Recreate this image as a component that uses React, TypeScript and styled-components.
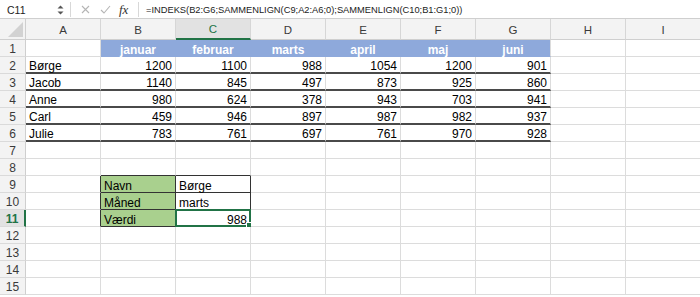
import styled, { createGlobalStyle } from 'styled-components'

const GlobalStyle = createGlobalStyle`
  html, body {
    margin: 0;
    padding: 0;
    background: #ffffff;
  }
  body {
    font-family: 'Liberation Sans', Arial, sans-serif;
  }
`

const GRID = '#dcdcdc'
const DARK = '#4a4a4a'
const BLUE = '#8ea9db'
const GREEN_FILL = '#a9d08e'
const EXCEL_GREEN = '#217346'

const Window = styled.div`
  width: 700px;
  height: 297px;
  overflow: hidden;
  display: flex;
  flex-flow: column nowrap;
  background: #fff;
`

const FormulaBar = styled.div`
  display: flex;
  align-items: center;
  height: 19px;
  padding-top: 1px;
  box-sizing: border-box;
  border-bottom: 1px solid #cfcfcf;
  font-size: 10px;
  color: #222;
`

const NameBox = styled.div`
  width: 50px;
  padding-left: 7px;
  font-size: 10.5px;
`

const Spinner = styled.div`
  display: flex;
  flex-flow: column;
  gap: 2px;
  width: 7px;
  svg {
    display: block;
  }
`

const Divider = styled.div<{ $space: number }>`
  width: 1px;
  height: 15px;
  background: #d8d8d8;
  margin: 0 ${(p) => p.$space}px 0 ${(p) => p.$space - 2}px;
`

const BarIcon = styled.span<{ $w: number }>`
  display: inline-flex;
  justify-content: center;
  width: ${(p) => p.$w}px;
`

const Fx = styled.span`
  font-family: 'Liberation Serif', 'Times New Roman', serif;
  font-style: italic;
  font-size: 13px;
  color: #333;
  width: 14px;
`

const Formula = styled.div`
  font-size: 9.3px;
  white-space: nowrap;
`

const Sheet = styled.div`
  display: grid;
  grid-template-columns: 26px repeat(9, 75px);
  grid-template-rows: 21px repeat(15, 17px);
  font-size: 12px;
  color: #000;
`

const Corner = styled.div`
  position: relative;
  background: #f3f3f3;
  border-right: 1px solid #cfcfcf;
  border-bottom: 1px solid #cfcfcf;
  svg {
    position: absolute;
    right: 2px;
    bottom: 2px;
  }
`

const ColHead = styled.div<{ $active?: boolean }>`
  display: flex;
  align-items: center;
  justify-content: center;
  padding-top: 1px;
  background: ${(p) => (p.$active ? '#e2e2e2' : '#f3f3f3')};
  color: ${(p) => (p.$active ? EXCEL_GREEN : '#3a3a3a')};
  border-right: 1px solid #d6d6d6;
  border-bottom: ${(p) => (p.$active ? `2px solid ${EXCEL_GREEN}` : '1px solid #cfcfcf')};
  font-size: 11.5px;
`

const RowHead = styled.div<{ $active?: boolean }>`
  display: flex;
  align-items: flex-end;
  justify-content: center;
  background: ${(p) => (p.$active ? '#e2e2e2' : '#f3f3f3')};
  color: ${(p) => (p.$active ? EXCEL_GREEN : '#3a3a3a')};
  font-weight: ${(p) => (p.$active ? 'bold' : 'normal')};
  border-right: ${(p) => (p.$active ? `2px solid ${EXCEL_GREEN}` : '1px solid #cfcfcf')};
  border-bottom: 1px solid #dadada;
  font-size: 12px;
  line-height: 13px;
`

type CellSpec = {
  v?: string
  align?: 'left' | 'right' | 'center'
  bold?: boolean
  fill?: string
  color?: string
  bb?: string
  br?: string
  selected?: boolean
}

const Cell = styled.div<{
  $align: string
  $bold?: boolean
  $fill?: string
  $color?: string
  $bb?: string
  $br?: string
}>`
  position: relative;
  display: flex;
  align-items: flex-end;
  justify-content: ${(p) =>
    p.$align === 'right' ? 'flex-end' : p.$align === 'center' ? 'center' : 'flex-start'};
  padding: 0 3px;
  background: ${(p) => p.$fill || '#fff'};
  color: ${(p) => p.$color || '#000'};
  font-weight: ${(p) => (p.$bold ? 'bold' : 'normal')};
  border-right: ${(p) => p.$br || `1px solid ${GRID}`};
  border-bottom: ${(p) => p.$bb || `1px solid ${GRID}`};
  white-space: nowrap;
  line-height: 12px;
`

const Selection = styled.div`
  position: absolute;
  left: -1px;
  top: -1px;
  right: -1px;
  bottom: -1px;
  border: 2px solid ${EXCEL_GREEN};
  pointer-events: none;
`

const Handle = styled.div`
  position: absolute;
  right: -4px;
  bottom: -4px;
  width: 5px;
  height: 5px;
  background: ${EXCEL_GREEN};
  border: 1px solid #fff;
`

const cols = ['A', 'B', 'C', 'D', 'E', 'F', 'G', 'H', 'I']
const months = ['januar', 'februar', 'marts', 'april', 'maj', 'juni']
const people: [string, number[]][] = [
  ['Børge', [1200, 1100, 988, 1054, 1200, 901]],
  ['Jacob', [1140, 845, 497, 873, 925, 860]],
  ['Anne', [980, 624, 378, 943, 703, 941]],
  ['Carl', [459, 946, 897, 987, 982, 937]],
  ['Julie', [783, 761, 697, 761, 970, 928]],
]

const buildRows = (): CellSpec[][] => {
  const rows: CellSpec[][] = Array.from({ length: 15 }, () =>
    Array.from({ length: 9 }, () => ({}))
  )
  months.forEach((m, i) => {
    rows[0][i + 1] = {
      v: m,
      align: 'center',
      bold: true,
      fill: BLUE,
      color: '#fff',
      br: i < 5 ? `1px solid ${BLUE}` : undefined,
      bb: `1px solid ${BLUE}`,
    }
  })
  people.forEach(([name, vals], r) => {
    const line = `2px solid ${DARK}`
    rows[r + 1][0] = { v: name, bb: line }
    vals.forEach((n, i) => {
      rows[r + 1][i + 1] = { v: String(n), align: 'right', bb: line }
    })
  })
  const thin = `1px solid #333`
  rows[7][1] = { bb: thin }
  rows[7][2] = { bb: thin }
  const labels = [
    ['Navn', 'Børge'],
    ['Måned', 'marts'],
    ['Værdi', '988'],
  ]
  labels.forEach(([label, val], i) => {
    rows[8 + i][0] = { br: thin }
    rows[8 + i][1] = { v: label, fill: GREEN_FILL, br: thin, bb: thin }
    rows[8 + i][2] = {
      v: val,
      align: i === 2 ? 'right' : 'left',
      br: thin,
      bb: thin,
      selected: i === 2,
    }
  })
  return rows
}

const rows = buildRows()

const App = () => {
  return (
    <Window>
      <GlobalStyle />
      <FormulaBar>
        <NameBox>C11</NameBox>
        <Spinner>
          <svg width='7' height='4' viewBox='0 0 7 4'>
            <path d='M0.5 3.5 L3.5 0.5 L6.5 3.5 Z' fill='#555' />
          </svg>
          <svg width='7' height='4' viewBox='0 0 7 4'>
            <path d='M0.5 0.5 L3.5 3.5 L6.5 0.5 Z' fill='#555' />
          </svg>
        </Spinner>
        <Divider $space={8} />
        <BarIcon $w={12}>
          <svg width='9' height='9' viewBox='0 0 9 9'>
            <path d='M1 1 L8 8 M8 1 L1 8' stroke='#b5b5b5' strokeWidth='1.1' />
          </svg>
        </BarIcon>
        <BarIcon $w={28}>
          <svg width='11' height='9' viewBox='0 0 11 9'>
            <path d='M1 5 L4 8 L10 1' stroke='#b5b5b5' strokeWidth='1.1' fill='none' />
          </svg>
        </BarIcon>
        <Fx>fx</Fx>
        <Divider $space={7} />
        <Formula>=INDEKS(B2:G6;SAMMENLIGN(C9;A2:A6;0);SAMMENLIGN(C10;B1:G1;0))</Formula>
      </FormulaBar>
      <Sheet>
        <Corner>
          <svg width='15' height='15' viewBox='0 0 15 15'>
            <path d='M15 0 L15 15 L0 15 Z' fill='#d2d2d2' />
          </svg>
        </Corner>
        {cols.map((c) => (
          <ColHead key={c} $active={c === 'C'}>
            {c}
          </ColHead>
        ))}
        {rows.map((row, r) => [
          <RowHead key={`h${r}`} $active={r === 10}>
            {r + 1}
          </RowHead>,
          ...row.map((cell, c) => (
            <Cell
              key={`${r}-${c}`}
              $align={cell.align || 'left'}
              $bold={cell.bold}
              $fill={cell.fill}
              $color={cell.color}
              $bb={cell.bb}
              $br={cell.br}
            >
              {cell.v}
              {cell.selected && (
                <Selection>
                  <Handle />
                </Selection>
              )}
            </Cell>
          )),
        ])}
      </Sheet>
    </Window>
  )
}

export default App
